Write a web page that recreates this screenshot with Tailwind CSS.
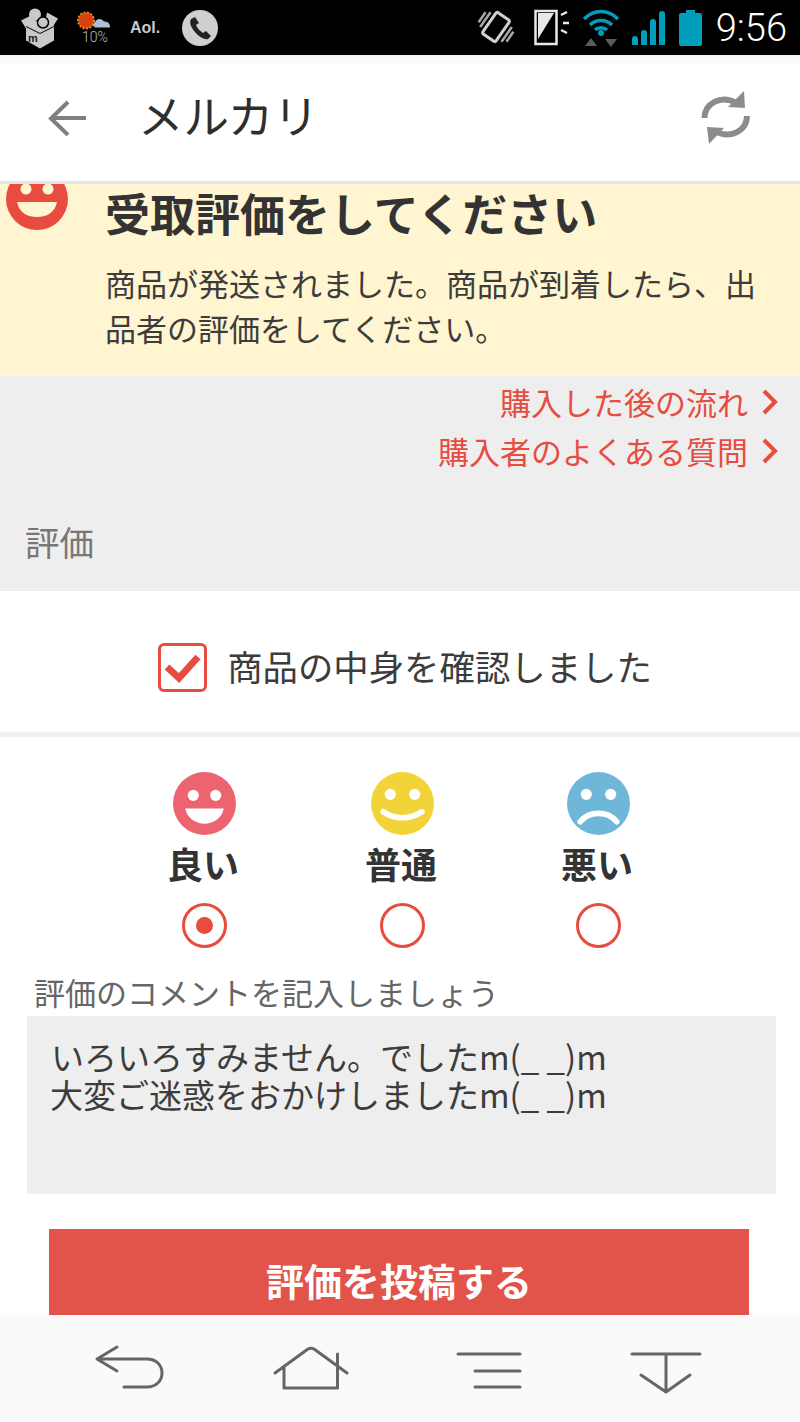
<!DOCTYPE html>
<html lang="ja">
<head>
    <meta charset="UTF-8">
    <meta name="viewport" content="width=device-width, initial-scale=1.0">
    <title>メルカリ</title>
    <script src="https://cdn.jsdelivr.net/npm/@tailwindcss/browser@4"></script>
</head>
<body class="bg-white font-['Noto_Sans_CJK_JP','Noto_Sans',sans-serif] text-[#333333]">
<div class="w-[800px] h-[1422px] overflow-hidden flex flex-col">

    <!-- status bar -->
    <div class="h-[55px] shrink-0 bg-black flex items-center">
        <svg class="ml-[21px] w-[38px] h-[48px]" viewBox="21 3.500 38 48">
            <path d="M26 25v15l14 8 14-8V25l-14-2z" fill="#c9c9c9"/>
            <path d="M21 20l10-5 9 9-12 7zM47 12l11 6-5 8-8-3z" fill="#c9c9c9"/>
            <circle cx="35" cy="14" r="6" fill="#c9c9c9"/>
            <circle cx="43" cy="22" r="5.500" fill="#c9c9c9" stroke="#000" stroke-width="1.500"/>
            <path d="M26 26l14 7 14-7" fill="none" stroke="#000" stroke-width="1"/>
            <text x="28" y="41" font-family="Liberation Sans" font-weight="700" font-size="11" fill="#222">m</text>
        </svg>
        <div class="ml-[17px] w-[36px] h-[48px] relative">
            <svg class="w-[36px] h-[30px]" viewBox="76 3.500 36 30">
                <circle cx="86" cy="20" r="8" fill="#d9400f" stroke="#e58a1f" stroke-width="2" stroke-dasharray="2 1.500"/>
                <path d="M96 27c-3 0-4-4-1-5 1-4 6-5 9-1 4 0 6 2 6 6z" fill="#a9c0d6"/>
            </svg>
            <span class="absolute left-[6px] top-[26px] font-['Roboto',sans-serif] font-light text-[14px] leading-none text-[#bdbdbd]">10%</span>
        </div>
        <span class="ml-[18px] w-[36px] font-['Liberation_Sans',sans-serif] font-bold text-[16px] leading-none text-[#c9c9c9]">Aol.</span>
        <svg class="ml-[16px] w-[36px] h-[36px]" viewBox="0 0 36 36">
            <circle cx="18" cy="18" r="18" fill="#cfcfcf"/>
            <path d="M9 9l4-2 4 6-3 2c1 3 4 6 7 8l3-2 5 5-3 3c-3 1-9-2-13-7S7 13 9 9z" fill="#222"/>
        </svg>

        <svg class="ml-auto w-[40px] h-[40px]" viewBox="476 8 40 40">
            <g transform="rotate(35 496 27)">
                <rect x="488" y="14" width="16" height="26" rx="2" fill="none" stroke="#d0d0d0" stroke-width="3"/>
                <path d="M483 18v18M479 21v12M509 18v18M513 21v12" stroke="#a8a8a8" stroke-width="2.500"/>
            </g>
        </svg>
        <svg class="ml-[18px] w-[37px] h-[37px]" viewBox="534 9 37 37">
            <rect x="535.500" y="11" width="21" height="33" fill="#000" stroke="#e8e8e8" stroke-width="2.500"/>
            <path d="M538 13h16l-16 26z" fill="#e8e8e8"/>
            <path d="M561 15l6-3M563 23h6M561 30l6 3" stroke="#e8e8e8" stroke-width="2.500"/>
        </svg>
        <svg class="ml-[11px] w-[40px] h-[40px]" viewBox="583 8 40 40">
            <path d="M585 19c10-10 24-10 34 0M591 25c6-6 16-6 22 0M596 30c3-3 9-3 12 0" fill="none" stroke="#009dbd" stroke-width="3.500"/>
            <circle cx="602" cy="33" r="3" fill="#009dbd"/>
            <path d="M586 46l6-8 6 8zM606 39h12l-6 8z" fill="#5a5a5a"/>
        </svg>
        <div class="ml-[10px] flex items-end gap-[3px] h-[34px]">
            <span class="w-[6px] h-[9px] bg-[#009dbd] rounded-t-sm"></span>
            <span class="w-[6px] h-[15px] bg-[#009dbd] rounded-t-sm"></span>
            <span class="w-[6px] h-[26px] bg-[#009dbd] rounded-t-sm"></span>
            <span class="w-[6px] h-[34px] bg-[#009dbd] rounded-t-sm"></span>
        </div>
        <svg class="ml-[14px] w-[23px] h-[36px]" viewBox="0 0 23 36">
            <path d="M7 0h9v3h5a2 2 0 0 1 2 2v29a2 2 0 0 1-2 2H2a2 2 0 0 1-2-2V5a2 2 0 0 1 2-2h5z" fill="#009dbd"/>
        </svg>
        <span class="ml-[14px] mr-[13px] font-['Roboto',sans-serif] font-light text-[38px] leading-none text-white">9:56</span>
    </div>

    <!-- toolbar -->
    <div class="h-[126px] shrink-0 bg-gradient-to-b from-[#f6f6f6] from-0% to-white to-[10%] flex items-center">
        <svg class="ml-[48px] w-[38px] h-[36px]" viewBox="48 99 38 36" fill="none" stroke="#808080" stroke-width="4">
            <path d="M68 101l-17 16.500 17 16.500M51 117h35"/>
        </svg>
        <span class="ml-[52px] mb-[6px] text-[45.500px] leading-none text-[#2e2e2e]">メルカリ</span>
        <svg class="ml-auto mr-[48px] w-[52px] h-[56px]" viewBox="700 91 52 56" fill="none" stroke="#8c8c8c" stroke-width="6">
            <path d="M704.500 119c0-14 16-24 32-15"/>
            <path d="M744 92l1 17-17-1z" fill="#8c8c8c" stroke="none"/>
            <path d="M747 117c0 14-16 24-32 15"/>
            <path d="M709 145l-2-17 17 1z" fill="#8c8c8c" stroke="none"/>
        </svg>
    </div>
    <div class="h-[3px] shrink-0 bg-[#e3e3e3]"></div>

    <!-- notice -->
    <div class="h-[192px] shrink-0 overflow-hidden bg-[#fff5d0] flex">
        <svg class="ml-[6px] -mt-[16px] w-[62px] h-[62px] shrink-0" viewBox="0 0 62 62">
            <circle cx="31" cy="31" r="31" fill="#e74c3f"/>
            <circle cx="20" cy="21" r="5.500" fill="#fff5d0"/>
            <circle cx="42" cy="21" r="5.500" fill="#fff5d0"/>
            <path d="M11 34h40c-2 11-11 15-20 15s-18-4-20-15z" fill="#fff5d0"/>
        </svg>
        <div class="ml-[37px] w-[660px]">
            <h1 class="mt-[4px] text-[45px] leading-[50px] font-bold text-[#333333] whitespace-nowrap">受取評価をしてください</h1>
            <p class="mt-[22px] text-[31px] leading-[45px] text-[#3c3c3c]">商品が発送されました。商品が到着したら、出品者の評価をしてください。</p>
        </div>
    </div>

    <!-- links + section label -->
    <div class="h-[215px] shrink-0 bg-[#eeeeee]">
        <div class="flex flex-col items-end pr-[22px] pt-[1px] text-[31px] leading-[49px] text-[#e74c3f]">
            <div class="flex items-center gap-[14px]">
                <span>購入した後の流れ</span>
                <svg class="w-[16px] h-[26px]" viewBox="0 0 16 26" fill="none" stroke="#e74c3f" stroke-width="4"><path d="M2 2l11 11L2 24"/></svg>
            </div>
            <div class="flex items-center gap-[14px]">
                <span>購入者のよくある質問</span>
                <svg class="w-[16px] h-[26px]" viewBox="0 0 16 26" fill="none" stroke="#e74c3f" stroke-width="4"><path d="M2 2l11 11L2 24"/></svg>
            </div>
        </div>
        <div class="mt-[41px] pl-[25px] text-[34.500px] leading-[50px] text-[#777777]">評価</div>
    </div>

    <!-- confirmation -->
    <div class="h-[141px] shrink-0 bg-white flex items-center justify-center gap-[20px] pt-[12px] pl-[10px]">
        <div class="w-[49px] h-[49px] border-[3px] border-[#e74c3f] rounded-[6px] flex items-center justify-center">
            <svg class="w-[37px] h-[30px]" viewBox="0 0 37 30" fill="none" stroke="#e74c3f" stroke-width="7"><path d="M3 14l12 11L34 4"/></svg>
        </div>
        <span class="mb-[4px] text-[35.400px] leading-none text-[#3c3c3c] whitespace-nowrap">商品の中身を確認しました</span>
    </div>
    <div class="h-[5px] shrink-0 bg-[#f0f0f0]"></div>

    <!-- rating -->
    <div class="flex-1 min-h-0 bg-white overflow-hidden">
        <div class="flex pl-[105px] pt-[35px]">
            <div class="w-[198px] flex flex-col items-center">
                <svg class="w-[63px] h-[63px]" viewBox="0 0 62 62">
                    <circle cx="31" cy="31" r="31" fill="#ec6470"/>
                    <circle cx="20" cy="23" r="5.500" fill="#fff"/>
                    <circle cx="42" cy="23" r="5.500" fill="#fff"/>
                    <path d="M12 36h38c-2 10-11 15-19 15s-17-5-19-15z" fill="#fff"/>
                </svg>
                <span class="mt-[3px] mr-[2px] text-[36px] leading-[50px] font-bold">良い</span>
                <span class="mt-[15px] w-[45px] h-[45px] rounded-full border-[3.500px] border-[#e74c3f] flex items-center justify-center">
                    <span class="w-[17px] h-[17px] rounded-full bg-[#e74c3f]"></span>
                </span>
            </div>
            <div class="w-[198px] flex flex-col items-center">
                <svg class="w-[63px] h-[63px]" viewBox="0 0 62 62">
                    <circle cx="31" cy="31" r="31" fill="#f2d43a"/>
                    <circle cx="19" cy="22" r="5.500" fill="#fff"/>
                    <circle cx="43" cy="22" r="5.500" fill="#fff"/>
                    <path d="M12 39c11 8 27 8 38 0" fill="none" stroke="#fff" stroke-width="5.500" stroke-linecap="round"/>
                </svg>
                <span class="mt-[3px] mr-[2px] text-[36px] leading-[50px] font-bold">普通</span>
                <span class="mt-[15px] w-[45px] h-[45px] rounded-full border-[3.500px] border-[#e74c3f]"></span>
            </div>
            <div class="w-[194px] flex flex-col items-center">
                <svg class="w-[63px] h-[63px]" viewBox="0 0 62 62">
                    <circle cx="31" cy="31" r="31" fill="#6fb7d9"/>
                    <circle cx="19" cy="22" r="5.500" fill="#fff"/>
                    <circle cx="43" cy="22" r="5.500" fill="#fff"/>
                    <path d="M13 49c9-11 27-11 36 0" fill="none" stroke="#fff" stroke-width="5.500" stroke-linecap="round"/>
                </svg>
                <span class="mt-[3px] mr-[2px] text-[36px] leading-[50px] font-bold">悪い</span>
                <span class="mt-[15px] w-[45px] h-[45px] rounded-full border-[3.500px] border-[#e74c3f]"></span>
            </div>
        </div>

        <div class="mt-[24px] pl-[34px] text-[31px] leading-[40px] text-[#666666]">評価のコメントを記入しましょう</div>
        <div class="ml-[27px] mt-[4px] w-[749px] h-[178px] bg-[#eeeeee] pl-[24px] pt-[21px] text-[33px] leading-[38px] text-[#3c3c3c] whitespace-nowrap">
            いろいろすみません。でしたm(_ _)m<br><span class="-ml-[1px]">大変ご迷惑をおかけしましたm(_ _)m</span>
        </div>
        <button class="block mx-[49px] mt-[35px] w-[700px] h-[102px] bg-[#e2534a] text-white text-[38px] font-bold leading-none">評価を投稿する</button>
    </div>

    <!-- nav bar -->
    <div class="h-[107px] shrink-0 bg-[#fafafa] relative">
        <svg class="absolute inset-0 w-[800px] h-[107px]" viewBox="0 1315 800 107" fill="none" stroke="#666666" stroke-width="3" stroke-linecap="round" stroke-linejoin="round">
            <path d="M117 1347l-20 12 20 12M97 1359h50c9 0 15 6 15 14s-6 14-15 14h-23"/>
            <path d="M275 1373l33-24c2-1 4-1 6 0l33 24M284 1367v21h53.500v-34"/>
            <path d="M458 1354h62M475 1371h45M475 1387h45"/>
            <path d="M632 1354h68M666 1354v38M641 1375l25 17 24-17"/>
        </svg>
    </div>
</div>
</body>
</html>
